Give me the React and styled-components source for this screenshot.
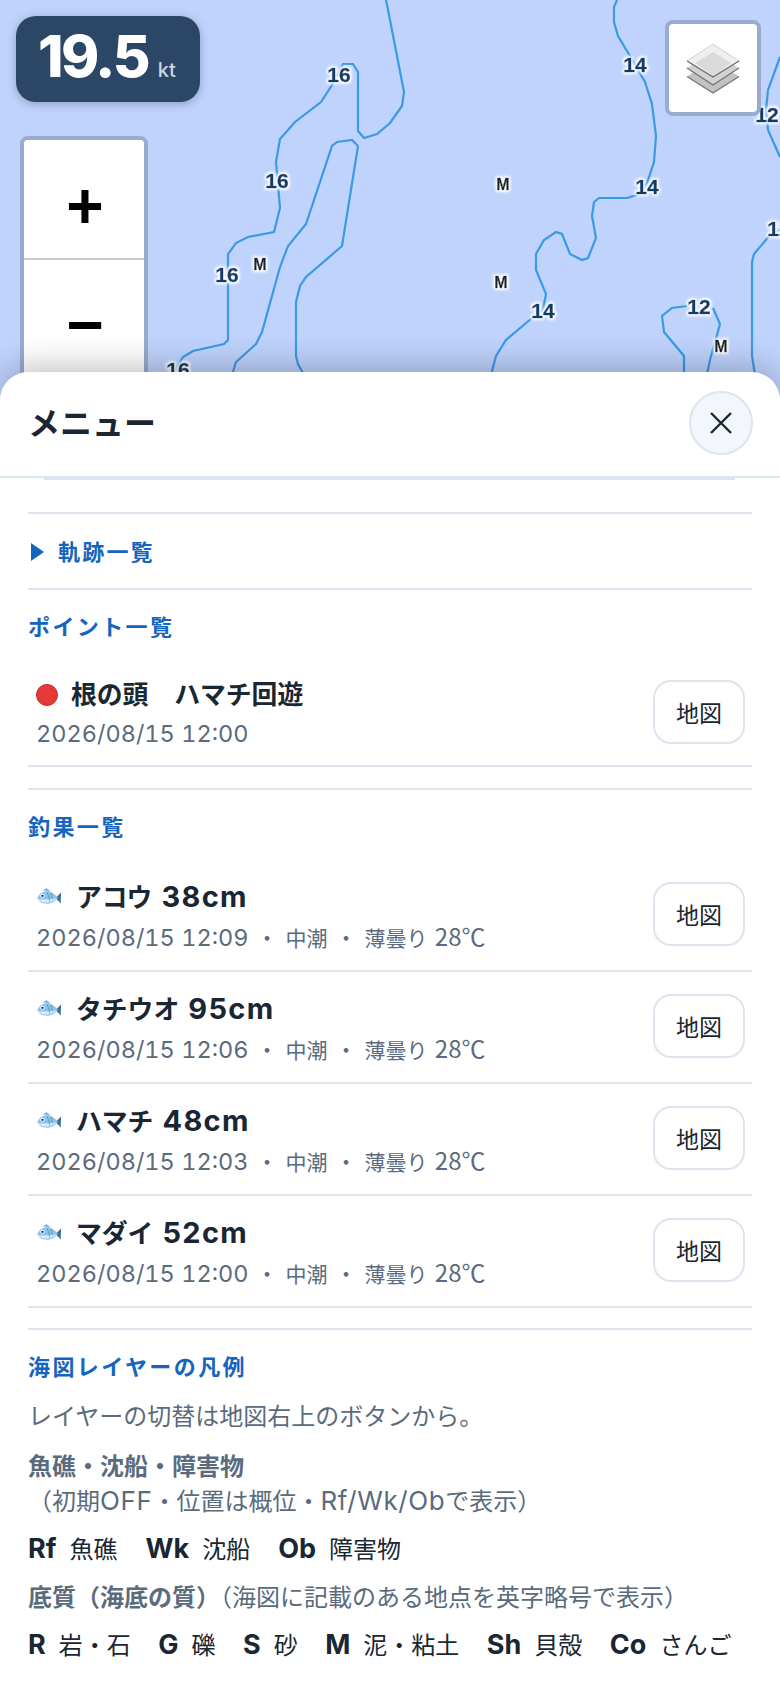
import React from "react";
import styled, { createGlobalStyle } from "styled-components";

const FONT = `Inter, "Noto Sans CJK JP", sans-serif`;

const Global = createGlobalStyle`
  html, body { margin: 0; padding: 0; }
  body { font-family: ${FONT}; background: #bfd3fd; }
  #root { width: 780px; height: 1688px; overflow: hidden; }
  * { box-sizing: border-box; }
`;

const Page = styled.div`
  position: relative;
  width: 780px;
  height: 1688px;
  overflow: hidden;
  background: #bfd3fd;
`;

const Chart = styled.svg`
  position: absolute;
  inset: 0;
`;

const Contour = styled.polyline`
  fill: none;
  stroke: #3b9ae6;
  stroke-width: 2.2;
`;

const Depth = styled.text`
  font-family: "Liberation Sans", sans-serif;
  font-weight: 700;
  font-size: ${(p) => (p.$small ? 16 : 21)}px;
  fill: ${(p) => (p.$small ? "#14202c" : "#0f3d6b")};
  stroke: ${(p) => (p.$small ? "#14202c" : "#0f3d6b")};
  stroke-width: 0.5;
  text-anchor: middle;
  dominant-baseline: central;
  filter: url(#halo);
`;

const Speed = styled.div`
  position: absolute;
  left: 16px;
  top: 16px;
  width: 184px;
  height: 86px;
  border-radius: 20px;
  background: #2c4766;
  box-shadow: 0 2px 10px rgba(0, 0, 0, 0.25);
  color: #fff;
  display: flex;
  align-items: baseline;
  padding: 4px 0 0 22px;
  gap: 10px;
`;

const SpeedValue = styled.span`
  font-size: 58px;
  font-weight: 800;
  line-height: 72px;
  letter-spacing: -2.6px;
`;

const SpeedUnit = styled.span`
  font-size: 20px;
  font-weight: 500;
  color: #cdd6e0;
`;

const ZoomBox = styled.div`
  position: absolute;
  left: 20px;
  top: 136px;
  width: 128px;
  border: 4px solid #9babcd;
  border-radius: 8px;
  overflow: hidden;
  background: #fff;
`;

const ZoomButton = styled.div`
  height: 120px;
  padding: ${(p) => (p.$last ? 10 : 14)}px 0 0 2px;
  display: flex;
  align-items: center;
  justify-content: center;
  background: #fff;
  color: #000;
  border-bottom: ${(p) => (p.$last ? "none" : "2px solid #ccc")};
  font-family: "Liberation Sans", sans-serif;
  font-weight: 700;
  font-size: 64px;
  line-height: 1;
`;

const LayerButton = styled.div`
  position: absolute;
  left: 665px;
  top: 20px;
  width: 96px;
  height: 96px;
  border: 4px solid #9babcd;
  border-radius: 8px;
  background: #fff;
  display: flex;
  align-items: center;
  justify-content: center;
`;

const Sheet = styled.section`
  position: absolute;
  left: 0;
  right: 0;
  top: 372px;
  bottom: 0;
  background: #fff;
  border-radius: 28px 28px 0 0;
  box-shadow: 0 -6px 32px rgba(0, 0, 0, 0.24);
  display: flex;
  flex-direction: column;
  overflow: hidden;
`;

const SheetHeader = styled.header`
  flex: none;
  height: 106px;
  padding: 0 27px 0 28px;
  display: flex;
  align-items: center;
  justify-content: space-between;
  border-bottom: 2px solid #dce8f0;
`;

const SheetTitle = styled.h2`
  margin: 0 0 6px 0;
  font-size: 32px;
  font-weight: 700;
  color: #1a2733;
`;

const CloseButton = styled.div`
  width: 64px;
  height: 64px;
  margin-bottom: 2px;
  border-radius: 50%;
  background: #f3f6fa;
  border: 2px solid #dce5ef;
  display: flex;
  align-items: center;
  justify-content: center;
`;

const Scroller = styled.div`
  flex: 1;
  min-height: 0;
  overflow: hidden;
  padding: 0 28px;
`;

const ClippedCard = styled.div`
  height: 2px;
  margin: 0 17px 0 16px;
  background: #dce5ef;
`;

const Section = styled.div`
  border-top: 2px solid #dce5ef;
  margin-top: ${(p) => p.$gap || 0}px;
`;

const Disclosure = styled.div`
  height: 74px;
  display: flex;
  align-items: center;
  gap: 14px;
  padding: 0 0 2px 3px;
  font-size: 22px;
  font-weight: 700;
  letter-spacing: 2.2px;
  color: #1565c0;
`;

const Triangle = styled.i`
  width: 0;
  height: 0;
  margin-top: 3px;
  border-left: 13px solid #1565c0;
  border-top: 9px solid transparent;
  border-bottom: 9px solid transparent;
`;

const SectionTitle = styled.h3`
  margin: 0 0 ${(p) => p.$mb || 16}px;
  padding-top: 21px;
  font-size: 22px;
  line-height: 32px;
  font-weight: 700;
  letter-spacing: 2.4px;
  color: #1565c0;
`;

const Row = styled.div`
  height: ${(p) => p.$h}px;
  display: flex;
  align-items: center;
  justify-content: space-between;
  padding: 0 7px ${(p) => p.$pb || 0}px 8px;
  border-bottom: 2px solid #dce5ef;
`;

const RowText = styled.div`
  display: flex;
  flex-direction: column;
  gap: 4px;
  padding-top: ${(p) => p.$pt || 8}px;
`;

const RowName = styled.div`
  display: flex;
  align-items: center;
  gap: ${(p) => p.$gap}px;
  margin-bottom: ${(p) => p.$mb || 0}px;
  font-size: 25.8px;
  line-height: 34px;
  font-weight: 700;
  color: #1a2733;
`;

const RowMeta = styled.div`
  font-size: 23.5px;
  line-height: 34px;
  font-variant-numeric: tabular-nums;
  color: #5a6b7d;
`;

const Measure = styled.span`
  margin-left: 3px;
  font-size: 29px;
  letter-spacing: 1.3px;
`;

const Sep = styled.span`
  margin: 0 7.5px;
  font-size: 22px;
`;

const Small = styled.span`
  font-size: 21px;
`;

const Temperature = styled.span`
  margin-left: 2px;
  font-family: "Noto Sans CJK JP", sans-serif;
  font-size: 24px;
`;

const Dot = styled.i`
  width: 22px;
  height: 22px;
  border-radius: 50%;
  background: #e53935;
  border: 1px solid #c62828;
`;

const MapButton = styled.div`
  width: 92px;
  height: 64px;
  border-radius: 18px;
  border: 2px solid #dce5ef;
  background: #fff;
  display: flex;
  align-items: center;
  justify-content: center;
  font-size: 23px;
  color: #1a2733;
`;

const Note = styled.p`
  margin: ${(p) => p.$top || 0}px 0 0;
  font-size: 24px;
  line-height: ${(p) => p.$lh || 36}px;
  color: #5a6b7d;
  white-space: nowrap;
`;

const NoteStrong = styled.strong`
  font-weight: 700;
`;

const NoteLatin = styled.span`
  font-size: 26px;
  letter-spacing: 0.6px;
`;

const Legend = styled.div`
  margin-top: ${(p) => p.$top || 0}px;
  display: flex;
  align-items: baseline;
  gap: ${(p) => p.$gap}px;
  height: 36px;
  line-height: 36px;
  white-space: nowrap;
`;

const LegendItem = styled.span`
  display: inline-flex;
  align-items: baseline;
  gap: 13px;
  font-size: 24px;
  color: #1a2733;
`;

const LegendCode = styled.b`
  font-size: 27px;
  font-weight: 700;
`;

const Fish = () => (
  <svg width="26" height="21" viewBox="0 0 30 24">
    <path d="M24 11 L29 6 L28.5 19 L24 14 Z" fill="#3d6fae" />
    <path d="M8 4 L12 1 L17 5 Z" fill="#7fb4dd" />
    <path d="M1.5 13 C4 6 12 3 18 6 C21 8 24 10 25 12.5 C22 17 16 20 10 19 C6 19 3 16 1.5 13 Z" fill="#8fc3ea" />
    <path d="M2 14 C6 19 16 20 24 13 C20 14 10 15 2 14 Z" fill="#dcecf6" />
    <path d="M13 6 L16 16 M17 7 L19 14" stroke="#5f97c9" strokeWidth="1.2" fill="none" />
    <circle cx="7.5" cy="10" r="2.4" fill="#fff" />
    <circle cx="7.5" cy="10" r="1.3" fill="#16202c" />
  </svg>
);

const contours = [
  "386,0 390,20 404,92 402,106 390,123 377,134 364,138 358,131 358,72 353,64 343,64 332,85 321,102 295,122 280,139 276,162 280,208 274,232 248,237 236,243 228,254 228,340 224,344 193,351 183,357 172,375",
  "358,146 352,140 337,142 332,146 306,224 288,246 280,267 262,332 256,344 236,362 232,375",
  "358,146 342,246 306,277 300,286 296,302 296,356 298,364 304,375",
  "617,0 614,7 614,22 618,36 630,56 645,82 652,104 656,136 654,162 647,183 640,194 627,198 599,198 594,202 592,216 596,238 588,258 582,260 570,254 562,234 556,232 544,240 536,254 536,270 546,294 543,310 532,318 506,340 496,356 491,375",
  "687,306 672,308 662,316 664,332 684,356 684,375",
  "713,308 720,324 710,360 707,375",
  "780,57 768,90 766,110 768,130 780,157",
  "780,230 770,235 754,254 752,262 752,356 755,375",
];

const labels = [
  [339, 74, "16"], [277, 180, "16"], [227, 274, "16"], [178, 369, "16"],
  [635, 64, "14"], [647, 186, "14"], [543, 310, "14"],
  [767, 114, "12"], [699, 306, "12"], [779, 228, "12"],
  [260, 264, "M", true], [503, 184, "M", true], [501, 282, "M", true], [721, 346, "M", true],
];

const catches = [
  ["アコウ", "38cm", "12:09"],
  ["タチウオ", "95cm", "12:06"],
  ["ハマチ", "48cm", "12:03"],
  ["マダイ", "52cm", "12:00"],
];

export default function App() {
  return (
    <Page>
      <Global />
      <Chart width="780" height="400" viewBox="0 0 780 400">
        <defs>
          <filter id="halo" x="-40%" y="-40%" width="180%" height="180%">
            <feMorphology in="SourceAlpha" operator="dilate" radius="1.4" result="d" />
            <feGaussianBlur in="d" stdDeviation="1.7" result="b" />
            <feFlood floodColor="#fff" />
            <feComposite in2="b" operator="in" result="w" />
            <feMerge>
              <feMergeNode in="w" />
              <feMergeNode in="w" />
              <feMergeNode in="SourceGraphic" />
            </feMerge>
          </filter>
        </defs>
        {contours.map((c) => (
          <Contour key={c} points={c} />
        ))}
        {labels.map(([x, y, t, s]) => (
          <Depth key={`${x}-${y}`} x={x} y={y} $small={s}>
            {t}
          </Depth>
        ))}
      </Chart>

      <Speed>
        <SpeedValue>19.5</SpeedValue>
        <SpeedUnit>kt</SpeedUnit>
      </Speed>

      <ZoomBox>
        <ZoomButton>+</ZoomButton>
        <ZoomButton $last>−</ZoomButton>
      </ZoomBox>

      <LayerButton>
        <svg width="56" height="54" viewBox="0 0 56 54">
          <path d="M28 19 L54 35.5 L28 52 L2 35.5 Z" fill="#c2c2c2" />
          <path d="M2 35.5 L28 52 L54 35.5" fill="none" stroke="#777" strokeWidth="1.4" />
          <path d="M28 11 L54 27 L28 44 L2 27 Z" fill="#d2d2d2" />
          <path d="M2 27 L28 44 L54 27" fill="none" stroke="#777" strokeWidth="1.4" />
          <path d="M28 3 L54 20 L28 36 L2 20 Z" fill="#efefef" stroke="#c4c4c4" strokeWidth="0.8" />
          <path d="M28 11 L46 22 L28 35 L10 22 Z" fill="#dadada" />
          <path d="M2 20 L28 36 L54 20" fill="none" stroke="#6e6e6e" strokeWidth="1.4" />
        </svg>
      </LayerButton>

      <Sheet>
        <SheetHeader>
          <SheetTitle>メニュー</SheetTitle>
          <CloseButton>
            <svg width="24" height="24" viewBox="0 0 24 24">
              <path d="M2 2 L22 22 M22 2 L2 22" stroke="#1a2733" strokeWidth="2.4" />
            </svg>
          </CloseButton>
        </SheetHeader>
        <Scroller>
          <ClippedCard />
          <Section $gap={32}>
            <Disclosure>
              <Triangle />
              軌跡一覧
            </Disclosure>
          </Section>
          <Section>
            <SectionTitle>ポイント一覧</SectionTitle>
            <Row $h={108}>
              <RowText $pt={5}>
                <RowName $gap={13} $mb={1}>
                  <Dot />
                  根の頭　ハマチ回遊
                </RowName>
                <RowMeta>2026/08/15 12:00</RowMeta>
              </RowText>
              <MapButton>地図</MapButton>
            </Row>
          </Section>
          <Section $gap={21}>
            <SectionTitle $mb={17}>釣果一覧</SectionTitle>
            {catches.map(([name, size, time]) => (
              <Row $h={112} $pb={2} key={name}>
                <RowText>
                  <RowName $gap={14}>
                    <Fish />
                    <span>
                      {name} <Measure>{size}</Measure>
                    </span>
                  </RowName>
                  <RowMeta>
                    2026/08/15 {time}
                    <Sep>・</Sep>
                    <Small>中潮</Small>
                    <Sep>・</Sep>
                    <Small>薄曇り</Small>
                    <Temperature> 28℃</Temperature>
                  </RowMeta>
                </RowText>
                <MapButton>地図</MapButton>
              </Row>
            ))}
          </Section>
          <Section $gap={20}>
            <SectionTitle>海図レイヤーの凡例</SectionTitle>
            <Note $top={5}>レイヤーの切替は地図右上のボタンから。</Note>
            <Note $top={15} $lh={34}>
              <NoteStrong>魚礁・沈船・障害物</NoteStrong>
              <br />
              （初期<NoteLatin>OFF</NoteLatin>・位置は概位・<NoteLatin>Rf/Wk/Ob</NoteLatin>で表示）
            </Note>
            <Legend $top={12} $gap={28}>
              <LegendItem>
                <LegendCode>Rf</LegendCode>魚礁
              </LegendItem>
              <LegendItem>
                <LegendCode>Wk</LegendCode>沈船
              </LegendItem>
              <LegendItem>
                <LegendCode>Ob</LegendCode>障害物
              </LegendItem>
            </Legend>
            <Note $top={13}>
              <NoteStrong>底質（海底の質）</NoteStrong>（海図に記載のある地点を英字略号で表示）
            </Note>
            <Legend $top={11} $gap={27.5}>
              <LegendItem>
                <LegendCode>R</LegendCode>岩・石
              </LegendItem>
              <LegendItem>
                <LegendCode>G</LegendCode>礫
              </LegendItem>
              <LegendItem>
                <LegendCode>S</LegendCode>砂
              </LegendItem>
              <LegendItem>
                <LegendCode>M</LegendCode>泥・粘土
              </LegendItem>
              <LegendItem>
                <LegendCode>Sh</LegendCode>貝殻
              </LegendItem>
              <LegendItem>
                <LegendCode>Co</LegendCode>さんご
              </LegendItem>
            </Legend>
            <Note $top={20}>
              <NoteStrong>水深・等深線</NoteStrong>
            </Note>
          </Section>
        </Scroller>
      </Sheet>
    </Page>
  );
}
